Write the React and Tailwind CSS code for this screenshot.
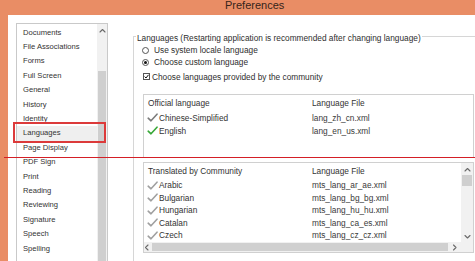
const categories = [
  'Documents',
  'File Associations',
  'Forms',
  'Full Screen',
  'General',
  'History',
  'Identity',
  'Languages',
  'Page Display',
  'PDF Sign',
  'Print',
  'Reading',
  'Reviewing',
  'Signature',
  'Speech',
  'Spelling',
]

const official = [
  { name: 'Chinese-Simplified', file: 'lang_zh_cn.xml', tone: 'grey' },
  { name: 'English', file: 'lang_en_us.xml', tone: 'green' },
]

const community = [
  { name: 'Arabic', file: 'mts_lang_ar_ae.xml' },
  { name: 'Bulgarian', file: 'mts_lang_bg_bg.xml' },
  { name: 'Hungarian', file: 'mts_lang_hu_hu.xml' },
  { name: 'Catalan', file: 'mts_lang_ca_es.xml' },
  { name: 'Czech', file: 'mts_lang_cz_cz.xml' },
]

function Check({ tone }) {
  const color = tone === 'green' ? '#38a838' : tone === 'grey' ? '#7c7c7c' : '#a0a0a0'
  return (
    <svg aria-hidden="true" className="h-[9px] w-[11px] shrink-0" fill="none" viewBox="0 0 11 9">
      <path d="M1.2 5.2 L4 7.8 L10 1.2" stroke={color} strokeLinecap="round" strokeLinejoin="round" strokeWidth="1.6" />
    </svg>
  )
}

function Chevron({ dir }) {
  const paths = {
    up: 'M1 4 L3.5 1.5 L6 4',
    down: 'M1 1.5 L3.5 4 L6 1.5',
    left: 'M4 1 L1.5 3.5 L4 6',
    right: 'M1.5 1 L4 3.5 L1.5 6',
  }
  const box = dir === 'up' || dir === 'down' ? '0 0 7 5.5' : '0 0 5.5 7'
  const size = dir === 'up' || dir === 'down' ? 'h-[5.5px] w-[7px]' : 'h-[7px] w-[5.5px]'
  return (
    <svg aria-hidden="true" className={size} fill="none" viewBox={box}>
      <path d={paths[dir]} stroke="#6a6a6a" strokeLinecap="round" strokeLinejoin="round" strokeWidth="1.1" />
    </svg>
  )
}

function Sidebar() {
  return (
    <div className="flex h-[260px] w-[92px] shrink-0 border border-[#c9c9c9] bg-white">
      <ul className="flex-1 pt-[1.5px]">
        {categories.map((item) => (
          <li
            className={
              item === 'Languages'
                ? 'flex h-[14.4px] items-center bg-[#efefef] pl-[6px] text-[7.6px] leading-[10px] text-[#333]'
                : 'flex h-[14.4px] items-center pl-[6px] text-[7.6px] leading-[10px] text-[#333]'
            }
            key={item}
          >
            {item}
          </li>
        ))}
      </ul>
      <div className="flex w-[10px] flex-col bg-[#f1f1f1]">
        <div className="flex h-[14px] items-center justify-center">
          <Chevron dir="up" />
        </div>
        <div className="h-[33px]" />
        <div className="mx-[1px] flex-1 bg-[#cfcfcf]" />
      </div>
    </div>
  )
}

function Radio({ checked, label }) {
  return (
    <div className="flex h-[12px] items-center pl-[8px]">
      <span className="flex h-[7px] w-[7px] items-center justify-center rounded-full border border-[#555] bg-white">
        {checked ? <span className="h-[3px] w-[3px] rounded-full bg-[#111]" /> : null}
      </span>
      <span className="ml-[5px] text-[8.3px] leading-[10px] text-[#2e2e2e]">{label}</span>
    </div>
  )
}

function LangTable({ title, rows, official: isOfficial }) {
  return (
    <div className={isOfficial ? 'ml-[9px] h-[64px] w-[331px] border border-[#d0d0d0] bg-white' : 'ml-[9px] mt-[4px] flex h-[91px] w-[331px] border border-[#d0d0d0] bg-white'}>
      <div className="flex min-w-0 flex-1 flex-col">
        <div className="flex h-[16px] shrink-0 items-center text-[8.3px] leading-[10px] text-[#333]">
          <span className="w-[168px] pl-[4px]">{title}</span>
          <span>Language File</span>
        </div>
        <div className={isOfficial ? '' : 'flex-1'}>
          {rows.map((row) => (
            <div
              className={isOfficial ? 'flex h-[13px] items-center text-[8.3px] leading-[10px] text-[#333]' : 'flex h-[12.5px] items-center text-[8.3px] leading-[10px] text-[#333]'}
              key={row.name}
            >
              <span className="flex w-[168px] items-center pl-[3px]">
                <Check tone={row.tone} />
                <span className="ml-[1px]">{row.name}</span>
              </span>
              <span className="text-[#3a3a3a]">{row.file}</span>
            </div>
          ))}
        </div>
        {isOfficial ? null : (
          <div className="flex h-[10px] shrink-0 items-center bg-[#f1f1f1]">
            <span className="flex w-[8px] items-center">
              <Chevron dir="left" />
            </span>
            <span className="h-[8px] flex-1 bg-[#d0d0d0]" />
            <span className="flex w-[13px] items-center justify-center">
              <Chevron dir="right" />
            </span>
          </div>
        )}
      </div>
      {isOfficial ? null : (
        <div className="flex w-[12px] shrink-0 flex-col bg-[#f1f1f1]">
          <div className="flex h-[12px] items-center justify-center pt-[2px]">
            <Chevron dir="up" />
          </div>
          <div className="mx-[1px] h-[11px] bg-[#cfcfcf]" />
          <div className="flex-1" />
          <div className="flex h-[10px] items-center justify-center">
            <Chevron dir="down" />
          </div>
          <div className="h-[10px] bg-[#f1f1f1]" />
        </div>
      )}
    </div>
  )
}

export default function App() {
  return (
    <div className="relative flex h-[261px] w-[475px] flex-col overflow-hidden bg-[#e98d65] font-['Liberation_Sans',Arial,sans-serif]">
      <div className="h-[15px] shrink-0 pl-[225px] text-[11px] leading-[11px] text-[#35241a]">Preferences</div>

      <div className="flex min-h-0 flex-1 pl-[8px]">
        <div className="flex min-w-0 flex-1 bg-white pl-[8px] pt-[8px]">
          <Sidebar />

          <div className="ml-[25px] min-w-0 flex-1 pt-[13px]">
            <div className="relative h-[240px] w-[360px] border border-[#d6d6d6] pt-[7px]">
              <span className="absolute left-[2px] top-[-4px] bg-white px-[1px] text-[8.3px] leading-[10px] text-[#2e2e2e]">
                Languages (Restarting application is recommended after changing language)
              </span>

              <Radio label="Use system locale language" />
              <Radio checked label="Choose custom language" />

              <div className="mt-[2.5px] flex h-[12px] items-center pl-[9px]">
                <span className="flex h-[7px] w-[7px] items-center justify-center border border-[#555] bg-white">
                  <svg aria-hidden="true" className="h-[5px] w-[5px]" fill="none" viewBox="0 0 5 5">
                    <path d="M0.6 2.6 L2 4 L4.5 0.8" stroke="#111" strokeWidth="1" />
                  </svg>
                </span>
                <span className="ml-[2px] text-[8.3px] leading-[10px] text-[#2e2e2e]">Choose languages provided by the community</span>
              </div>

              <div className="mt-[11.5px]">
                <LangTable official rows={official} title="Official language" />
                <LangTable rows={community} title="Translated by Community" />
              </div>
            </div>
          </div>
        </div>
      </div>

      <div className="absolute left-[13px] top-[122px] h-[21px] w-[93px] border-2 border-[#dc3a3a]" />
      <div className="absolute left-[4px] right-0 top-[157px] h-px bg-[#d41f26]" />
    </div>
  )
}
